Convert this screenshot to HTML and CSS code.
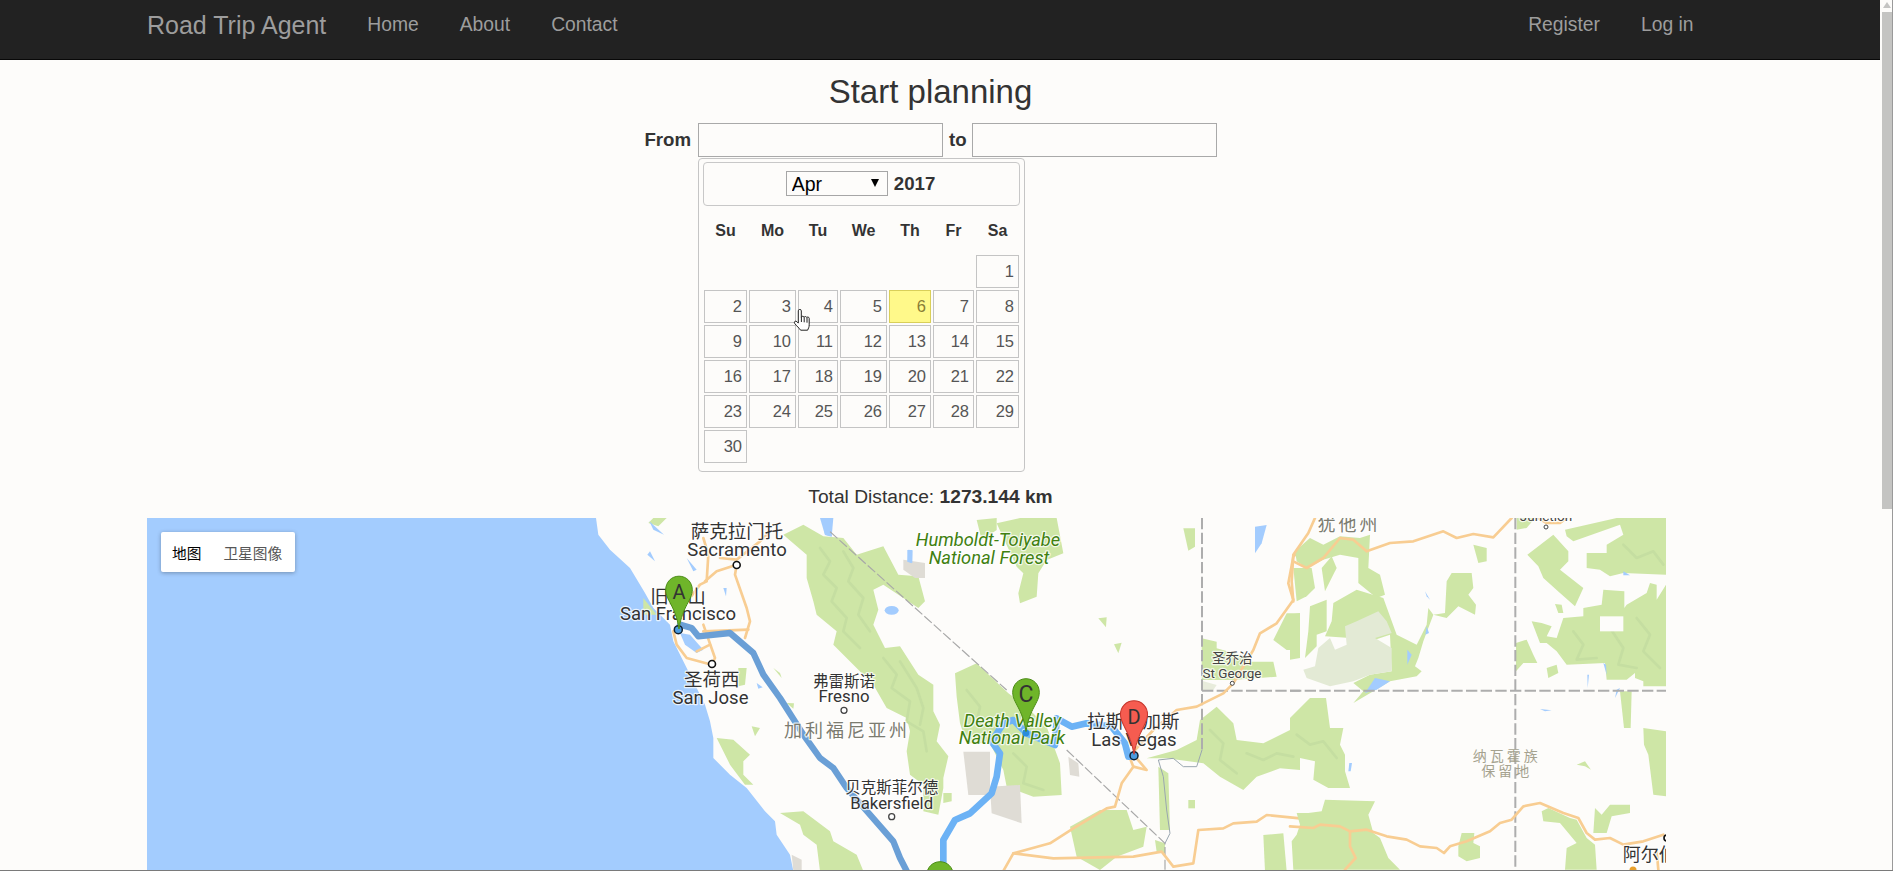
FILE: index.html
```html
<!DOCTYPE html>
<html lang="en">
<head>
    <meta charset="UTF-8">
    <meta name="viewport" content="width=device-width, initial-scale=1.0">
    <title>Road Trip Agent</title>
    <link rel="stylesheet" href="styles.css">
</head>
<body>
<div class="shell">
    <div class="page">
        <nav class="navbar">
            <a class="brand" href="#">Road Trip Agent</a>
            <a class="nav-link" href="#">Home</a>
            <a class="nav-link" href="#">About</a>
            <a class="nav-link" href="#">Contact</a>
            <a class="nav-link nav-push" href="#">Register</a>
            <a class="nav-link" href="#">Log in</a>
        </nav>

        <main class="content">
            <h1>Start planning</h1>
            <form class="date-form">
                <label class="from-label" for="from">From</label>
                <input type="text" id="from" name="from">
                <label class="to-label" for="to">to</label>
                <input type="text" id="to" name="to">

                <div class="calendar">
                    <div class="cal-head">
                        <span class="month-wrap">
                            <select class="month-select">
                                <option>Apr</option>
                            </select>
                        </span>
                        <b>2017</b>
                    </div>
                    <div class="cal-grid">
                        <div class="dow">Su</div><div class="dow">Mo</div><div class="dow">Tu</div><div class="dow">We</div><div class="dow">Th</div><div class="dow">Fr</div><div class="dow">Sa</div>
                        <div></div><div></div><div></div><div></div><div></div><div></div><div class="day">1</div>
                        <div class="day">2</div><div class="day">3</div><div class="day">4</div><div class="day">5</div><div class="day today">6</div><div class="day">7</div><div class="day">8</div>
                        <div class="day">9</div><div class="day">10</div><div class="day">11</div><div class="day">12</div><div class="day">13</div><div class="day">14</div><div class="day">15</div>
                        <div class="day">16</div><div class="day">17</div><div class="day">18</div><div class="day">19</div><div class="day">20</div><div class="day">21</div><div class="day">22</div>
                        <div class="day">23</div><div class="day">24</div><div class="day">25</div><div class="day">26</div><div class="day">27</div><div class="day">28</div><div class="day">29</div>
                        <div class="day">30</div>
                    </div>
                    <!-- mouse pointer caught in the capture -->
                    <svg class="hand" viewBox="0 0 20 25">
                        <path d="M5.3 1.8c0-1.9 3-1.9 3 0v6.4c.3-1.3 2.6-1.3 2.8.1.3-1.1 2.4-1 2.7.3.4-.9 2.3-.7 2.4.7v6.5c0 2.6-.9 3.6-1.6 5.4H7.6c-1.2-2-4.2-4.3-6-6.9-1-1.6 1-3 2.3-1.6l1.4 1.4z"/>
                        <path d="M8.4 8v5M11.2 8.3v5M14 8.7v5"/>
                    </svg>
                </div>
            </form>

            <p class="total">Total Distance: <b>1273.144 km</b></p>

            <div class="map">
                <svg class="map-svg" viewBox="147 518 1519 353">
                    <defs>
                        <symbol id="pin-green" viewBox="0 0 28 54">
                            <path class="pin-g" d="M14 .7C6.300 .7 .7 6.800 .7 14.300.7 25 10.500 30 14 53.500 17.500 30 27.300 25 27.300 14.300 27.300 6.800 21.700 .7 14 .7z"/>
                        </symbol>
                        <symbol id="pin-red" viewBox="0 0 28 54">
                            <path class="pin-r" d="M14 .7C6.300 .7 .7 6.800 .7 14.300.7 25 10.500 30 14 53.500 17.500 30 27.300 25 27.300 14.300 27.300 6.800 21.700 .7 14 .7z"/>
                        </symbol>
                    </defs>

                    <rect class="land" x="147" y="518" width="1519" height="353"/>

                    <!-- west part, traced in 3x crop coordinates -->
                    <g transform="translate(590 518) scale(.33333)">
                        <polygon class="sea" points="18,0 25,50 60,95 120,150 165,225 190,270 240,320 250,370 280,430 310,490 345,560 360,610 370,660 370,720 420,770 470,810 525,880 555,910 560,950 600,1010 610,1059 -1400,1059 -1400,0"/>
                        <polygon class="green" points="580,50 640,20 700,55 760,60 800,110 880,85 925,170 985,175 1005,250 985,270 880,200 850,215 865,275 850,320 885,390 930,385 985,470 1030,500 1030,580 1050,620 1040,670 1075,715 1060,780 1060,810 1045,890 1000,880 1000,800 960,770 950,700 960,640 950,600 890,570 850,500 790,440 730,380 740,340 680,290 670,250 650,180 650,110"/>
                        <polygon class="green" points="380,660 430,665 480,710 460,730 460,770 490,800 465,800 420,740"/>
                        <polygon class="green" points="445,450 470,450 465,500 445,505"/>
                        <polygon class="green" points="485,625 510,630 495,655"/>
                        <polygon class="green" points="550,450 570,465 575,480"/>
                        <polygon class="green" points="160,240 200,290 160,290"/>
                        <polygon class="green" points="590,555 612,556 610,572"/>
                        <polygon class="green" points="1060,825 1085,825 1085,850 1060,855"/>
                        <polygon class="green" points="175,15 190,0 230,0 205,25"/>
                        <polygon class="green" points="570,885 640,880 720,940 730,970 800,1010 820,1059 690,1059 680,980 640,950 630,920"/>
                        <polyline class="shade" points="690,90 720,130 700,170 740,210 725,250 770,300 760,340 810,390"/>
                        <polyline class="shade" points="760,100 790,150 775,190 820,240 805,290 840,340"/>
                        <polyline class="shade" points="880,420 920,470 905,510 960,550 950,610 1000,640 1010,700"/>
                        <polyline class="shade" points="930,430 980,510 1000,570 990,620"/>
                        <polygon class="grey" points="605,1010 635,1025 635,1059 610,1059"/>
                        <polygon class="grey" points="940,125 1005,135 1005,180 975,180 940,155"/>
                        <polygon class="lake" points="695,0 725,0 725,55 705,50"/>
                        <ellipse class="lake" cx="905" cy="277" rx="21" ry="13"/>
                        <polygon class="lake" points="955,95 968,97 967,135 953,130"/>
                        <polygon class="lake" points="270,345 300,350 340,395 320,405 285,380"/>
                        <polygon class="lake" points="290,120 320,155 310,160"/>
                        <polygon class="lake" points="180,100 195,130 172,110"/>
                        <polygon class="lake" points="178,10 222,50 190,35"/>
                        <polygon class="lake" points="500,495 518,508 505,512"/>
                        <polygon class="lake" points="400,210 410,210 408,235"/>
                        <polyline class="road" points="340,60 355,110 350,190 330,200 300,240"/>
                        <polyline class="road" points="345,190 380,160 440,140 435,170 470,270 480,310 465,360"/>
                        <polyline class="road" points="475,335 340,340"/>
                        <polyline class="road" points="250,340 260,380 290,420 365,440 375,420 340,320"/>
                        <polyline class="road" points="390,120 440,125 510,70 540,40"/>
                        <polyline class="road" points="360,380 320,400"/>
                        <polyline class="route-twice" points="270,320 305,330 325,355 420,345 490,405 520,470 570,540 640,650 690,720 730,750 770,810 910,970 930,1020 950,1059"/>
                    </g>

                    <!-- centre part -->
                    <g transform="translate(800 510) scale(.33333)">
                        <polygon class="green" points="590,40 660,24 770,24 790,130 740,150 715,190 710,260 660,280 655,250 670,190 650,170"/>
                        <polygon class="green" points="530,30 590,24 590,60 545,90"/>
                        <polygon class="green" points="465,490 530,460 625,550 680,590 740,650 780,760 785,855 700,860 620,830 610,780 600,760 570,700 500,700 480,640 470,560"/>
                        <polyline class="shade" points="500,540 540,590 530,640 590,660"/>
                        <polyline class="shade" points="640,730 680,770 670,820 730,840"/>
                        <polygon class="grey" points="490,725 570,725 570,855 505,855"/>
                        <polygon class="grey" points="570,830 660,825 665,940 575,910"/>
                        <polygon class="grey" points="805,740 835,760 838,800 810,795"/>
                        <polygon class="green" points="895,325 920,322 918,352"/>
                        <polygon class="green" points="942,403 965,398 955,430"/>
                        <polygon class="green" points="1150,55 1185,55 1185,110 1165,122"/>
                        <polygon class="green" points="1205,385 1250,395 1250,415 1340,440 1350,455 1420,455 1430,500 1300,510 1205,510"/>
                        <polygon class="green" points="1420,390 1460,310 1500,310 1500,420 1460,420"/>
                        <polygon class="green" points="1040,745 1130,720 1190,690 1200,630 1250,590 1300,640 1310,690 1390,700 1470,660 1500,610 1500,780 1440,775 1370,800 1330,840 1260,800 1210,760 1100,745"/>
                        <polyline class="shade" points="1230,660 1270,700 1260,750 1310,790"/>
                        <polyline class="shade" points="1340,730 1390,750 1430,730 1480,740"/>
                        <polygon class="green" points="810,950 900,900 980,900 1000,960 1040,950 1030,1010 950,1040 900,1080 830,1040"/>
                        <polygon class="green" points="1390,975 1450,970 1460,1083 1395,1083"/>
                        <polygon class="green" points="1065,990 1095,1000 1095,1030 1070,1025"/>
                        <polygon class="green" points="1165,870 1185,870 1185,895 1165,895"/>
                        <polygon class="green" points="1075,770 1105,790 1110,960 1080,960"/>
                        <polygon class="lake" points="60,24 100,24 95,80 75,75"/>
                        <polygon class="lake" points="1365,50 1400,45 1385,100 1365,130"/>
                        <polygon class="lake" points="322,120 336,120 335,160 322,155"/>
                        <polygon class="light-grey" points="1205,512 1250,525 1240,540 1205,540"/>
                        <polyline class="border-thin" points="90,65 620,540"/>
                        <polyline class="border-thin" points="800,720 1095,1000 1095,1083"/>
                        <polyline class="border" points="1206,24 1206,720"/>
                        <polyline class="border" points="1206,542 1500,542"/>
                        <polyline class="river" points="1206,720 1190,770 1150,770 1120,745 1075,750 1090,800 1100,900 1110,970 1095,1000"/>
                        <polyline class="road" points="1500,120 1480,140 1465,220 1480,270 1430,340 1380,370 1360,420 1300,520 1270,550 1190,590 1130,600 1060,660 1005,720"/>
                        <polyline class="road" points="610,1083 640,1030 750,1000 820,955 920,895 945,890 965,820 1000,770 990,745"/>
                        <polyline class="road" points="1000,770 1040,780 1010,745"/>
                        <polyline class="road" points="640,1030 760,1045 1000,1040 1085,1025 1120,1070 1180,1060 1195,960 1270,955 1300,940 1370,935 1400,915 1500,925"/>
                        <polyline class="route" points="430,1083 430,990 465,930 510,910 575,850 590,800 600,730 575,695 610,640 640,630 680,670"/>
                        <polyline class="route" points="680,670 765,705 770,625 815,650 860,640 935,650 975,700 985,740 1000,740"/>
                    </g>

                    <!-- east part -->
                    <g transform="translate(1290 518) scale(.33333)">
                        <polygon class="green" points="15,100 60,60 100,80 150,55 210,60 240,50 235,150 270,170 285,230 260,240 205,195 205,120 150,110 100,125 50,150 20,130"/>
                        <polygon class="green" points="10,150 65,150 75,210 50,235 20,250"/>
                        <polygon class="green" points="95,150 125,115 140,150 105,220"/>
                        <polygon class="green" points="60,265 110,245 110,340 80,350 80,385 45,420 55,340"/>
                        <polygon class="green" points="0,290 30,285 30,420 0,425"/>
                        <polygon class="green" points="130,255 200,215 280,240 320,350 380,380 410,320 415,270 430,290 465,285 470,190 485,165 545,165 550,210 535,230 558,260 555,290 505,265 470,300 430,290 400,370 385,420 375,445 395,460 380,475 300,490 250,520 190,555 220,520 190,495 240,470 305,460 300,350 255,365 105,355 125,310"/>
                        <polygon class="pale" points="85,390 120,360 135,395 170,380 165,325 200,310 265,280 290,310 305,345 255,360 305,390 305,460 240,470 190,490 120,505 50,480 40,455 75,445"/>
                        <polygon class="green" points="550,80 590,90 590,130 565,135"/>
                        <polygon class="green" points="825,35 980,0 1128,0 1128,170 1000,165 960,175 930,155 890,150 890,105 950,105 950,80 1000,50 990,20 850,70 830,55"/>
                        <polygon class="green" points="712,110 790,50 835,100 835,130 810,155 880,210 855,265 810,225 760,180 745,145"/>
                        <polygon class="green" points="680,0 735,0 710,30 680,35"/>
                        <polygon class="green" points="820,300 880,295 880,270 935,260 940,215 1003,220 1003,270 1010,260 1070,225 1080,195 1100,200 1100,245 1128,200 1128,505 1060,505 1060,490 1035,480 1035,465 1010,485 950,485 945,435 830,440 800,400 770,375 750,375 725,310 755,315 785,325 770,355 800,360"/>
                        <polyline class="shade" points="850,340 880,380 860,425 920,420"/>
                        <polyline class="shade" points="960,330 1000,390 985,440 1040,450"/>
                        <polyline class="shade" points="1040,300 1080,350 1060,400 1110,450"/>
                        <polyline class="shade" points="1000,80 1040,120 1090,100 1120,140"/>
                        <polygon class="land" points="930,295 1000,295 1000,340 930,340"/>
                        <polygon class="green" points="795,258 815,260 820,285 805,285"/>
                        <polygon class="green" points="678,375 710,365 730,410 742,435 700,435 678,460"/>
                        <polygon class="green" points="770,450 800,440 805,465 775,480"/>
                        <polygon class="green" points="990,520 1025,520 1022,630 1002,630"/>
                        <polygon class="green" points="1060,630 1128,640 1128,835 1090,830 1075,710 1062,680"/>
                        <polygon class="green" points="860,740 885,730 903,755 885,745"/>
                        <polygon class="green" points="0,600 60,540 108,540 120,630 160,630 150,680 165,710 165,760 180,810 115,810 70,785 75,730 30,720 0,690"/>
                        <polyline class="shade" points="20,650 60,680 100,670 140,720"/>
                        <polygon class="green" points="20,885 55,885 95,880 105,845 255,850 235,890 250,945 270,960 295,1020 330,1055 10,1055 5,970 20,950 30,920"/>
                        <polygon class="green" points="515,945 553,945 550,975 570,985 570,1020 530,1030 505,1015 505,985"/>
                        <polygon class="green" points="755,880 775,870 840,900 860,905 890,960 915,980 920,1055 825,1055 830,990 860,975 810,915 760,910"/>
                        <polygon class="green" points="915,870 935,890 960,860 1020,860 1020,885 965,895 950,945 910,945"/>
                        <polygon class="lake" points="405,220 420,245 410,235"/>
                        <polygon class="lake" points="410,325 417,345 406,350"/>
                        <polygon class="lake" points="352,395 365,410 352,440"/>
                        <polygon class="lake" points="225,525 255,480 300,490 260,515"/>
                        <polygon class="lake" points="178,735 186,735 182,760 175,760"/>
                        <polygon class="lake" points="750,573 785,577 765,580"/>
                        <polygon class="lake" points="940,435 948,440 950,470"/>
                        <polygon class="lake" points="892,470 897,470 893,510"/>
                        <polygon class="lake" points="975,540 990,510 980,515"/>
                        <polygon class="lake" points="1000,160 1020,172 1000,172"/>
                        <polyline class="border" points="0,518 1128,518"/>
                        <polyline class="border" points="676,0 676,1055"/>
                        <polyline class="road" points="75,0 55,45 10,110 5,190 10,250"/>
                        <polyline class="road" points="10,130 50,150 100,120 150,60 190,65 230,100 300,75 370,70 460,40 500,60 550,48 610,58 665,0"/>
                        <polyline class="road" points="0,925 70,930 90,920 150,925 180,940 230,935 290,955 350,965 390,985 440,990 462,1005 480,985 530,970 600,940 630,915 665,905 700,865 750,855 820,885 865,900 890,945 915,965 960,960 1000,980 1060,970 1120,950"/>
                        <polyline class="road" points="180,940 180,985 197,1020 165,1055"/>
                        <polyline class="road" points="745,0 770,15 810,15 830,0"/>
                        <polyline class="road" points="1105,1055 1100,1000"/>
                    </g>

                    <!-- labels, page coordinates -->
                    <text class="lbl city" x="737" y="538">萨克拉门托</text>
                    <text class="lbl city" x="737" y="556">Sacramento</text>
                    <circle class="dot" cx="736.700" cy="565" r="3.500"/>
                    <text class="lbl city" x="678" y="603">旧金山</text>
                    <text class="lbl city" x="678" y="620">San Francisco</text>
                    <circle class="dot" cx="712" cy="664" r="3.500"/>
                    <text class="lbl city" x="711.700" y="686">圣荷西</text>
                    <text class="lbl city" x="710.500" y="704">San Jose</text>
                    <text class="lbl town" x="844" y="687">弗雷斯诺</text>
                    <text class="lbl town-latin" x="844" y="702">Fresno</text>
                    <circle class="dot small" cx="844" cy="710.300" r="3"/>
                    <text class="lbl state" x="847" y="737">加利福尼亚州</text>
                    <text class="lbl town" x="891.700" y="793">贝克斯菲尔德</text>
                    <text class="lbl town-latin" x="891.700" y="808.700">Bakersfield</text>
                    <circle class="dot small" cx="891.700" cy="816.700" r="3"/>
                    <text class="lbl park" x="988" y="546">Humboldt-Toiyabe</text>
                    <text class="lbl park" x="989" y="564">National Forest</text>
                    <text class="lbl park" x="1012.300" y="726.700">Death Valley</text>
                    <text class="lbl park" x="1012" y="744.300">National Park</text>
                    <text class="lbl city" x="1133.300" y="728.300">拉斯维加斯</text>
                    <text class="lbl city" x="1134" y="746">Las Vegas</text>
                    <text class="lbl tiny" x="1232.300" y="663.300">圣乔治</text>
                    <text class="lbl tiny" x="1232" y="677.700">St George</text>
                    <circle class="dot tiny-dot" cx="1232.300" cy="683.300" r="2"/>
                    <text class="lbl state" x="1349" y="530.700">犹他州</text>
                    <text class="lbl tiny" x="1546" y="520.700">Junction</text>
                    <circle class="dot tiny-dot" cx="1546" cy="527" r="2"/>
                    <text class="lbl tribe" x="1506.700" y="761.300">纳瓦霍族</text>
                    <text class="lbl tribe" x="1506.700" y="776.300">保留地</text>
                    <text class="lbl city-start" x="1622.700" y="861.300">阿尔伯克基</text>
                    <circle class="amber" cx="1633" cy="870" r="3.500"/>
                    <circle class="dot" cx="1667" cy="838" r="3"/>

                    <!-- waypoints -->
                    <circle class="stop" cx="678.300" cy="629.700" r="4"/>
                    <circle class="stop" cx="1134" cy="755.700" r="4"/>
                    <circle class="stop-c" cx="1025.700" cy="733" r="3.500"/>
                    <use href="#pin-green" x="665" y="575" width="28" height="55"/>
                    <text class="pin-letter" x="679" y="599">A</text>
                    <use href="#pin-green" x="926" y="861" width="28" height="54"/>
                    <use href="#pin-green" x="1011" y="678" width="30" height="54"/>
                    <text class="pin-letter big" x="1026" y="701.500">C</text>
                    <use href="#pin-red" x="1119" y="700" width="30" height="55"/>
                    <text class="pin-letter" x="1134" y="724">D</text>
                </svg>

                <div class="map-type">
                    <button type="button" class="map-btn active">地图</button>
                    <button type="button" class="map-btn">卫星图像</button>
                </div>
            </div>
        </main>
    </div>

    <div class="scrollbar">
        <div class="scroll-arrow"></div>
        <div class="scroll-thumb"></div>
    </div>
</div>
</body>
</html>
```

FILE: styles.css
```css
html, body {
    margin: 0;
    height: 100%;
    overflow: hidden;
}
body {
    font-family: "Liberation Sans", Arial, sans-serif;
    font-size: 18.67px;
    background-color: #fdfcfa;
    color: #333;
}
.shell {
    display: flex;
    height: 100vh;
    box-sizing: border-box;
    border-bottom: 1px solid #7a7a7a;
    overflow: hidden;
}
.page {
    flex: 1;
    min-width: 0;
}

/* navbar */
.navbar {
    display: flex;
    align-items: center;
    box-sizing: border-box;
    height: 60px;
    padding: 0 166px 9px 147px;
    background-color: #222;
    border-bottom: 1px solid #080808;
    font-size: 19.3px;
}
.navbar a {
    color: #9d9d9d;
    text-decoration: none;
}
.brand {
    font-size: 25px;
    padding-right: 20.5px;
}
.nav-link {
    padding: 0 20.5px;
}
.nav-push {
    margin-left: auto;
}

/* planner */
.content {
    display: flex;
    flex-direction: column;
    align-items: center;
    width: 1567px;
    margin-left: 147px;
}
h1 {
    margin: 11px 0 10px;
    font-size: 33px;
    font-weight: normal;
    line-height: 42px;
}
.date-form {
    display: grid;
    grid-template-columns: auto 245px auto 245px;
    column-gap: 6px;
    row-gap: 1px;
    align-items: center;
}
.date-form label {
    font-weight: bold;
}
.from-label {
    padding-right: 1px;
}
.to-label {
    margin-right: -1px;
}
.date-form input {
    box-sizing: border-box;
    height: 34px;
    border: 1px solid #a9a9a9;
    background-color: #fdfcfa;
    padding: 1px 2px;
    font-size: 18.67px;
}

/* calendar */
.calendar {
    grid-column: 2 / 5;
    justify-self: start;
    position: relative;
    box-sizing: border-box;
    width: 327px;
    padding: 3px 4px 8px;
    border: 1px solid #c5c5c5;
    border-radius: 4px;
}
.cal-head {
    display: flex;
    align-items: center;
    justify-content: center;
    gap: 6px;
    box-sizing: border-box;
    width: 317px;
    height: 44px;
    padding: 0 2px 1px 0;
    border: 1px solid #c8c8c8;
    border-radius: 4px;
}
.month-wrap {
    position: relative;
    display: block;
    width: 102px;
    height: 25px;
}
.month-wrap::after {
    content: "";
    position: absolute;
    right: 9px;
    top: 8px;
    border-left: 4px solid transparent;
    border-right: 4px solid transparent;
    border-top: 8px solid #000;
}
.month-select {
    appearance: none;
    -webkit-appearance: none;
    box-sizing: border-box;
    width: 100%;
    height: 100%;
    padding: 0 0 0 5px;
    border: 1px solid #a6a6a6;
    border-radius: 0;
    background: #fdfcfa;
    color: #000;
    font-family: inherit;
    font-size: 19.5px;
}
.cal-grid {
    display: grid;
    grid-template-columns: 43px 47px 40px 47px 42px 41px 43px;
    grid-template-rows: 47px repeat(6, 33px);
    gap: 2px;
    margin-left: 1px;
}
.cal-grid > div:nth-child(-n+7) {
    margin-bottom: -2px;
}
.dow {
    display: flex;
    align-items: center;
    justify-content: center;
    font-size: 16px;
    font-weight: bold;
}
.day {
    display: flex;
    align-items: center;
    justify-content: flex-end;
    padding-right: 4px;
    border: 1px solid #c4c4c4;
    font-size: 16.5px;
    color: #555;
}
.today {
    background-color: #fff98a;
    border-color: #d9cf59;
    color: #8a7d36;
}
.hand {
    position: absolute;
    left: 94px;
    top: 150px;
    width: 20px;
    height: 25px;
    fill: #fff;
    stroke: #222;
    stroke-width: 1;
}

.total {
    margin: 12px 0 8px;
    font-size: 19.2px;
    line-height: 26px;
}

/* map */
.map {
    position: relative;
    align-self: flex-start;
    flex: none;
    width: 1519px;
    height: 353px;
}
.map-svg {
    display: block;
    width: 1519px;
    height: 353px;
}
.land { fill: #fdfcfa; }
.sea { fill: #a3ccfe; }
.lake { fill: #a3ccfe; }
.green { fill: #cee6a6; }
.pale { fill: #e3ead5; }
.grey { fill: #dfdcd5; }
.light-grey { fill: #e8ecdc; }
.road, .route, .route-twice, .border, .border-thin, .river, .shade {
    fill: none;
    stroke-linejoin: round;
    stroke-linecap: round;
}
.shade { stroke: #c5dea1; stroke-width: 8; }
.road { stroke: #f8cd92; stroke-width: 8; }
.route { stroke: #6cb2f5; stroke-width: 20; }
.route-twice { stroke: #6a9fd6; stroke-width: 19; }
.border {
    stroke: #adadad;
    stroke-width: 6;
    stroke-dasharray: 34 10;
    stroke-linecap: butt;
}
.border-thin {
    stroke: #a8a8a8;
    stroke-width: 3.5;
    stroke-dasharray: 30 8;
    stroke-linecap: butt;
}
.river { stroke: #9aa6b0; stroke-width: 3; }

.lbl, .pin-letter {
    font-family: Roboto, "Noto Sans CJK SC", sans-serif;
}
.lbl {
    text-anchor: middle;
    paint-order: stroke;
    stroke: rgba(255, 255, 255, .75);
    stroke-width: 2.5px;
    stroke-linejoin: round;
}
.city { font-size: 18.5px; fill: #333; }
.town { font-size: 15.5px; fill: #333; }
.town-latin { font-size: 16.8px; fill: #333; }
.tiny { font-size: 13.5px; fill: #444; }
.park { font-size: 18.3px; font-style: italic; fill: #3f8010; }
.state { font-size: 18px; letter-spacing: 3px; fill: #7b7b70; }
.tribe { font-size: 14px; letter-spacing: 3px; fill: #a5a28f; stroke: none; }
.city-start { font-size: 18px; fill: #333; text-anchor: start; }
.dot { fill: #fff; stroke: #111; stroke-width: 1.600; }
.small { stroke: #444; stroke-width: 1.300; }
.tiny-dot { stroke: #444; stroke-width: 1; }
.amber { fill: #e8a02c; }
.stop { fill: #4a9be0; stroke: #123; stroke-width: 1.500; }
.stop-c { fill: #2a8cdc; }
.pin-g { fill: #6fb52a; stroke: #4c8c17; stroke-width: 1; }
.pin-r { fill: #f65c50; stroke: #c6372d; stroke-width: 1; }
.pin-letter {
    font-size: 20px;
    text-anchor: middle;
    fill: #333;
}
.pin-letter.big {
    font-size: 23px;
}

.map-type {
    position: absolute;
    left: 14px;
    top: 14px;
    display: flex;
    align-items: center;
    box-sizing: border-box;
    width: 134px;
    height: 40px;
    padding-left: 11px;
    gap: 22px;
    background-color: #fff;
    border-radius: 2px;
    box-shadow: 0 1px 4px rgba(0, 0, 0, .3);
}
.map-btn {
    padding: 0;
    border: none;
    background: none;
    font-family: "Noto Sans CJK SC", sans-serif;
    font-size: 14.7px;
    color: #565656;
}
.map-btn.active {
    color: #000;
}

/* the browser's own scrollbar, as it shows in the capture */
.scrollbar {
    position: relative;
    flex: none;
    width: 13px;
    box-sizing: border-box;
    padding: 0 0 0 2px;
    border-right: 1px solid #9a9a9a;
}
.scroll-arrow {
    position: absolute;
    left: 3px;
    top: 2px;
    border-left: 4px solid transparent;
    border-right: 4px solid transparent;
    border-bottom: 6px solid #c4c4c2;
}
.scroll-thumb {
    height: 497px;
    margin-top: 12px;
    background-color: #c4c4c2;
}
```
